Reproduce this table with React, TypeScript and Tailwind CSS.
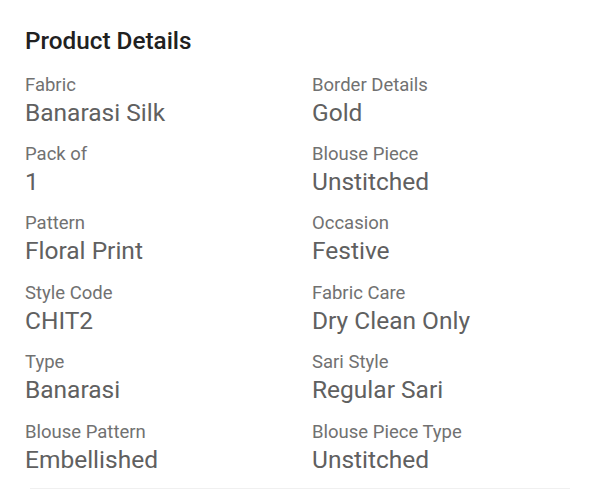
const details: { label: string; value: string }[] = [
  { label: "Fabric", value: "Banarasi Silk" },
  { label: "Border Details", value: "Gold" },
  { label: "Pack of", value: "1" },
  { label: "Blouse Piece", value: "Unstitched" },
  { label: "Pattern", value: "Floral Print" },
  { label: "Occasion", value: "Festive" },
  { label: "Style Code", value: "CHIT2" },
  { label: "Fabric Care", value: "Dry Clean Only" },
  { label: "Type", value: "Banarasi" },
  { label: "Sari Style", value: "Regular Sari" },
  { label: "Blouse Pattern", value: "Embellished" },
  { label: "Blouse Piece Type", value: "Unstitched" },
];

export default function App() {
  return (
    <div
      className="w-[600px] h-[489px] bg-white overflow-hidden"
      style={{ fontFamily: "Roboto, 'Noto Sans', sans-serif" }}
    >
      <div className="px-[25px] pt-[25.7px]">
        <h2 className="text-[24.3px] leading-[30px] font-medium text-[#212121]">
          Product Details
        </h2>

        {/* spec grid */}
        <div className="mt-[16px] grid grid-cols-2 gap-x-6 gap-y-[13.4px]">
          {details.map((d) => (
            <div key={d.label}>
              <p className="text-[18.5px] leading-[26px] text-[#717171]">
                {d.label}
              </p>
              <p className="text-[24.5px] leading-[30px] text-[#606060]">
                {d.value}
              </p>
            </div>
          ))}
        </div>
      </div>

      <div className="mx-[30px] mt-[13.3px] h-px bg-[#f0f0f0]" />
    </div>
  );
}
